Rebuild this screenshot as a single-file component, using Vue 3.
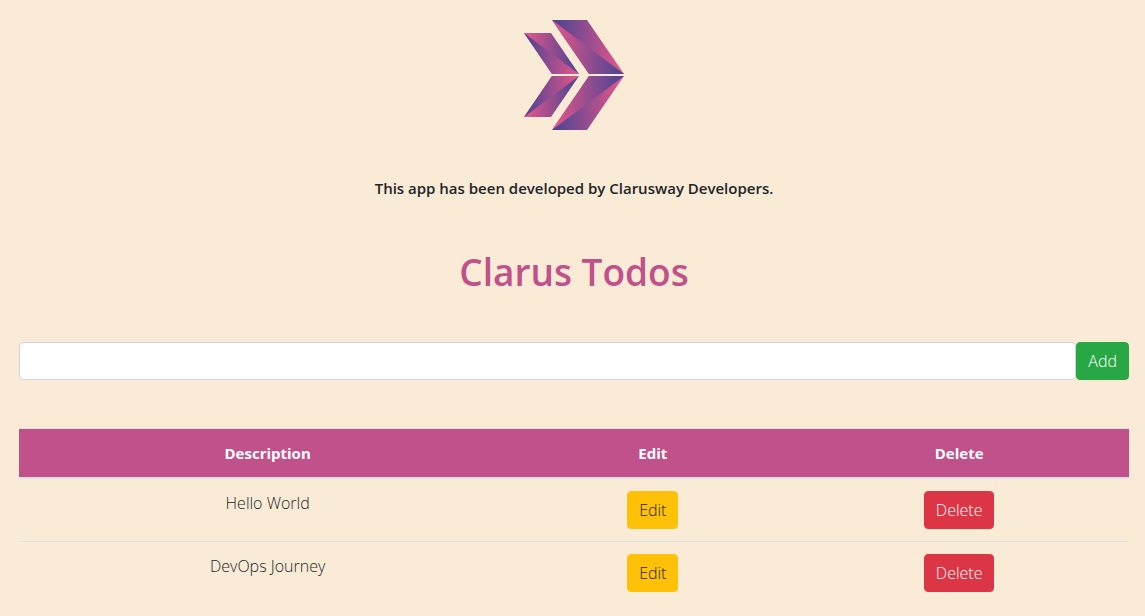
<script setup>
import { ref } from 'vue'

const draft = ref('')
const editingId = ref(null)
const todos = ref([
  { id: 1, description: 'Hello World' },
  { id: 2, description: 'DevOps Journey' },
])

function saveTodo() {
  const description = draft.value.trim()
  if (!description) return
  const current = todos.value.find((todo) => todo.id === editingId.value)
  if (current) current.description = description
  else todos.value.push({ id: Date.now(), description })
  editingId.value = null
  draft.value = ''
}

function editTodo(todo) {
  editingId.value = todo.id
  draft.value = todo.description
}

function deleteTodo(id) {
  todos.value = todos.value.filter((todo) => todo.id !== id)
}
</script>

<template>
  <main class="page">
    <svg class="logo" viewBox="0 0 100 110" aria-hidden="true">
      <defs>
        <linearGradient id="pinkToBlue">
          <stop offset="0" stop-color="#e9568a" />
          <stop offset="1" stop-color="#454493" />
        </linearGradient>
        <linearGradient id="blueToPink">
          <stop offset="0" stop-color="#454493" />
          <stop offset="1" stop-color="#e9568a" />
        </linearGradient>
      </defs>
      <path d="M28 0H63L100 54H65Z" fill="url(#blueToPink)" />
      <path d="M28 0L100 54H65Z" fill="url(#pinkToBlue)" />
      <path d="M28 110H63L100 56H65Z" fill="url(#blueToPink)" />
      <path d="M28 110L100 56H65Z" fill="url(#pinkToBlue)" />
      <path d="M0 13H27L55 54H28Z" fill="url(#pinkToBlue)" />
      <path d="M0 13L55 54H28Z" fill="url(#blueToPink)" />
      <path d="M0 97H27L55 56H28Z" fill="url(#pinkToBlue)" />
      <path d="M0 97L55 56H28Z" fill="url(#blueToPink)" />
    </svg>
    <p class="credit">This app has been developed by Clarusway Developers.</p>
    <h1>Clarus Todos</h1>
    <form class="add-form" @submit.prevent="saveTodo">
      <input v-model="draft" class="field" type="text" aria-label="Description" />
      <button class="btn add" type="submit">Add</button>
    </form>
    <table>
      <thead>
        <tr>
          <th class="description" scope="col">Description</th>
          <th class="edit-col" scope="col">Edit</th>
          <th scope="col">Delete</th>
        </tr>
      </thead>
      <tbody>
        <tr v-for="todo in todos" :key="todo.id">
          <td>{{ todo.description }}</td>
          <td><button class="btn edit" type="button" @click="editTodo(todo)">Edit</button></td>
          <td><button class="btn delete" type="button" @click="deleteTodo(todo.id)">Delete</button></td>
        </tr>
      </tbody>
    </table>
  </main>
</template>

<style>
body {
  margin: 0;
  background: #faebd7;
}
</style>

<style scoped>
* {
  box-sizing: border-box;
}
.page {
  padding: 20px 16px 24px 19px;
  color: #212529;
  font: 300 16px/24px "Open Sans", "Noto Sans", sans-serif;
  text-align: center;
}
.logo {
  display: block;
  width: 100px;
  height: 110px;
  margin: 0 auto;
}
.credit {
  margin: 46px 0 0;
  font-size: 15px;
  font-weight: 600;
}
h1 {
  margin: 48px 0 0;
  color: #c0518a;
  font-size: 37px;
  font-weight: 600;
  line-height: 48px;
}
.add-form {
  display: flex;
  margin: 46px 0 48px;
}
.field {
  flex: 1;
  min-width: 0;
  height: 38px;
  padding: 6px 12px;
  border: 1px solid #ced4da;
  border-radius: 4px;
  background: #fff;
  color: #495057;
  font: inherit;
}
.btn {
  height: 38px;
  padding: 6px 11px;
  border: 1px solid transparent;
  border-radius: 4px;
  font: inherit;
  vertical-align: middle;
  cursor: pointer;
}
.add {
  border-color: #28a745;
  background: #28a745;
  color: #fff;
}
.edit {
  border-color: #ffc107;
  background: #ffc107;
  color: #212529;
}
.delete {
  border-color: #dc3545;
  background: #dc3545;
  color: #fff;
}
table {
  width: 100%;
  border-collapse: collapse;
  table-layout: fixed;
}
th,
td {
  padding: 12px;
  border-top: 1px solid #dee2e6;
  vertical-align: top;
}
th {
  border-bottom: 2px solid #dee2e6;
  background: #c0518a;
  color: #fff;
  font-size: 15px;
  font-weight: 700;
}
.description {
  width: 44.8%;
}
.edit-col {
  width: 24.6%;
}
</style>
